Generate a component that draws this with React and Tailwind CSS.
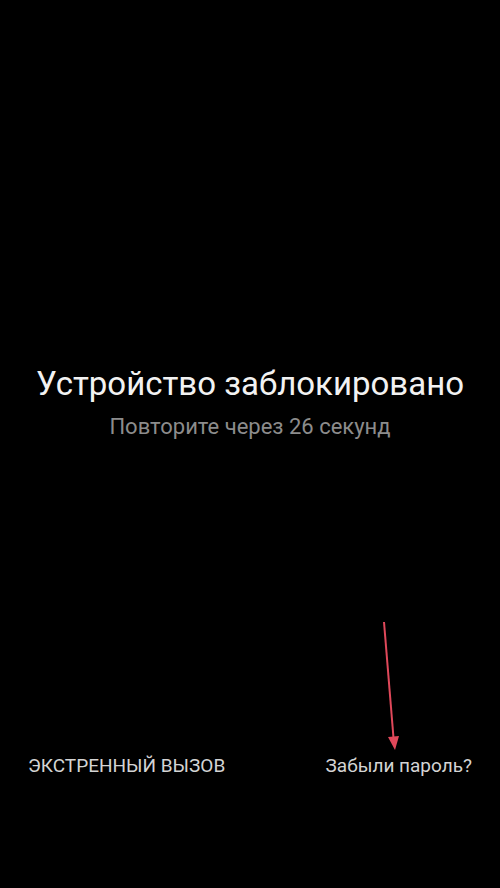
export default function App() {
  return (
    <div className="w-[500px] h-[888px] bg-black flex flex-col relative" style={{ fontFamily: "Roboto, 'Noto Sans', sans-serif" }}>
      <div className="flex flex-col items-center pt-[364px]">
        <div className="text-[33px] leading-[40px] text-[#f2f2f2]">Устройство заблокировано</div>
        <div className="text-[22px] leading-[28px] mt-[9px] text-[#8c8c8c]">Повторите через 26 секунд</div>
      </div>
      <div className="flex-1" />
      <div className="flex justify-between items-center px-[28px] pb-[111px] text-[19px] leading-[22px] text-[#d4d4d4]">
        <span>ЭКСТРЕННЫЙ ВЫЗОВ</span>
        <span>Забыли пароль?</span>
      </div>
      <svg className="absolute left-0 top-0" width="500" height="888" viewBox="0 0 500 888">
        <line x1="384" y1="622" x2="393.5" y2="738" stroke="#e0485a" strokeWidth="2" />
        <polygon points="388,737 399,736 395,750" fill="#e0485a" />
      </svg>
    </div>
  );
}
